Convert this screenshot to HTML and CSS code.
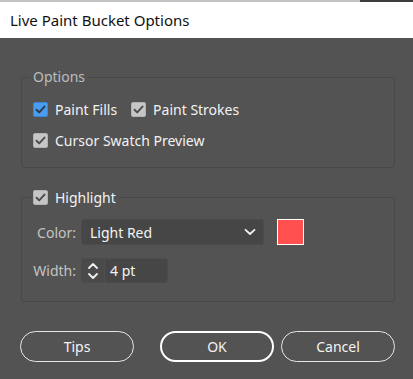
FILE: index.html
```html
<!DOCTYPE html>
<html lang="en">
<head>
    <meta charset="UTF-8">
    <meta name="viewport" content="width=device-width, initial-scale=1.0">
    <title>Live Paint Bucket Options</title>
    <link rel="stylesheet" href="styles.css">
</head>
<body>
    <div class="top-line"></div>
    <div class="titlebar">Live Paint Bucket Options</div>

    <div class="dialog">
        <fieldset class="group group-options">
            <legend class="legend-text">Options</legend>
            <div class="check-row">
                <label class="check">
                    <span class="box box-blue">
                        <svg viewBox="0 0 15 15" width="15" height="15"><path d="M3.5 7.8 L6.2 10.4 L11.5 4.6" /></svg>
                    </span>
                    Paint Fills
                </label>
                <label class="check">
                    <span class="box">
                        <svg viewBox="0 0 15 15" width="15" height="15"><path d="M3.5 7.8 L6.2 10.4 L11.5 4.6" /></svg>
                    </span>
                    Paint Strokes
                </label>
            </div>
            <div class="check-row">
                <label class="check">
                    <span class="box">
                        <svg viewBox="0 0 15 15" width="15" height="15"><path d="M3.5 7.8 L6.2 10.4 L11.5 4.6" /></svg>
                    </span>
                    Cursor Swatch Preview
                </label>
            </div>
        </fieldset>

        <fieldset class="group group-highlight">
            <legend class="legend-check">
                <label class="check">
                    <span class="box">
                        <svg viewBox="0 0 15 15" width="15" height="15"><path d="M3.5 7.8 L6.2 10.4 L11.5 4.6" /></svg>
                    </span>
                    Highlight
                </label>
            </legend>
            <div class="field-row row-color">
                <span class="field-label">Color:</span>
                <div class="select">
                    <span>Light Red</span>
                    <svg class="chevron" viewBox="0 0 12 8" width="12" height="8"><path d="M1.5 1.8 L6 6 L10.5 1.8" /></svg>
                </div>
                <div class="swatch"></div>
            </div>
            <div class="field-row row-width">
                <span class="field-label">Width:</span>
                <div class="spinner">
                    <div class="spin-arrows">
                        <svg viewBox="0 0 12 22" width="12" height="22">
                            <path d="M2 8 L6 4 L10 8" />
                            <path d="M2 14 L6 18 L10 14" />
                        </svg>
                    </div>
                    <span class="spin-value">4 pt</span>
                </div>
            </div>
        </fieldset>

        <div class="buttons">
            <button class="btn btn-tips">Tips</button>
            <button class="btn btn-ok">OK</button>
            <button class="btn btn-cancel">Cancel</button>
        </div>
    </div>
</body>
</html>
```

FILE: styles.css
```css
body {
    margin: 0;
    padding: 0;
    width: 413px;
    height: 379px;
    overflow: hidden;
    background: #535353;
    font-family: 'Noto Sans', 'Open Sans', sans-serif;
    color: #f0f0f0;
}

.top-line {
    height: 2px;
    background: linear-gradient(to right, #c4c4c4 0, #c4c4c4 360px, #3c3c3c 360px);
}

.titlebar {
    height: 36px;
    line-height: 36px;
    padding-left: 10px;
    background: #ffffff;
    color: #111111;
    font-size: 15px;
}

.dialog {
    padding: 0 18px 0 21px;
}

.group {
    margin: 0;
    border: 1px solid #484848;
    border-radius: 3px;
    padding: 0 11px;
    min-width: 0;
}

.group-options {
    margin-top: 30px;
    padding-top: 13px;
    padding-bottom: 17px;
}

.group-highlight {
    margin-top: 20px;
    padding-top: 13px;
    padding-bottom: 18px;
}

.legend-text {
    margin-left: -3px;
    padding: 0 3px;
    height: 18px;
    line-height: 18px;
    font-size: 14px;
    color: #bdbdbd;
}

.legend-check {
    margin-left: -2px;
    padding: 0 3px 0 2px;
    height: 18px;
}

.check-row {
    display: flex;
    gap: 14px;
    height: 20px;
    align-items: center;
}

.check-row + .check-row {
    margin-top: 11px;
}

.check {
    display: flex;
    align-items: center;
    gap: 7px;
    height: 18px;
    font-size: 14px;
    color: #f2f2f2;
}

.box {
    width: 15px;
    height: 15px;
    box-sizing: border-box;
    border-radius: 2px;
    background: #c6c6c6;
    border: 1px solid #b2b2b2;
    display: flex;
    align-items: center;
    justify-content: center;
}

.box svg {
    flex: none;
}

.box path {
    fill: none;
    stroke: #4e4e4e;
    stroke-width: 2;
    stroke-linecap: round;
    stroke-linejoin: round;
}

.box-blue {
    background: #4a9cf0;
    border-color: #3e86d2;
}

.box-blue path {
    stroke: #2f3a48;
}

.field-row {
    display: flex;
    align-items: center;
}

.row-color {
    height: 26px;
}

.row-width {
    height: 25px;
    margin-top: 13px;
}

.field-label {
    width: 43px;
    margin-right: 5px;
    text-align: right;
    font-size: 14px;
    color: #c4c4c4;
}

.select {
    width: 183px;
    height: 26px;
    box-sizing: border-box;
    display: flex;
    align-items: center;
    justify-content: space-between;
    padding: 0 7px 0 8px;
    background: #464646;
    border: 1px solid #4c4c4c;
    border-radius: 3px;
    font-size: 14px;
    color: #f4f4f4;
}

.chevron path,
.spin-arrows path {
    fill: none;
    stroke: #f0f0f0;
    stroke-width: 1.8;
    stroke-linecap: round;
    stroke-linejoin: round;
}

.swatch {
    width: 27px;
    height: 26px;
    box-sizing: border-box;
    margin-left: 13px;
    background: #ff4f4f;
    border: 1px solid #ffffff;
}

.spinner {
    width: 87px;
    height: 25px;
    box-sizing: border-box;
    display: flex;
    align-items: center;
    background: #464646;
    border: 1px solid #4c4c4c;
    border-radius: 3px;
}

.spin-arrows {
    width: 22px;
    height: 100%;
    display: flex;
    align-items: center;
    justify-content: center;
    border-right: 1px solid #4f4f4f;
    background: #4a4a4a;
}

.spin-value {
    padding-left: 5px;
    font-size: 14px;
    color: #f4f4f4;
}

.buttons {
    display: flex;
    margin-top: 29px;
    margin-left: -1px;
}

.btn {
    width: 114px;
    height: 31px;
    box-sizing: border-box;
    border: 1px solid #e6e6e6;
    border-radius: 16px;
    background: transparent;
    color: #f4f4f4;
    font-family: 'Noto Sans', 'Open Sans', sans-serif;
    font-size: 14px;
    padding: 0;
}

.btn-ok {
    margin-left: 26px;
    border: 2px solid #ffffff;
}

.btn-cancel {
    margin-left: 7px;
}
```
